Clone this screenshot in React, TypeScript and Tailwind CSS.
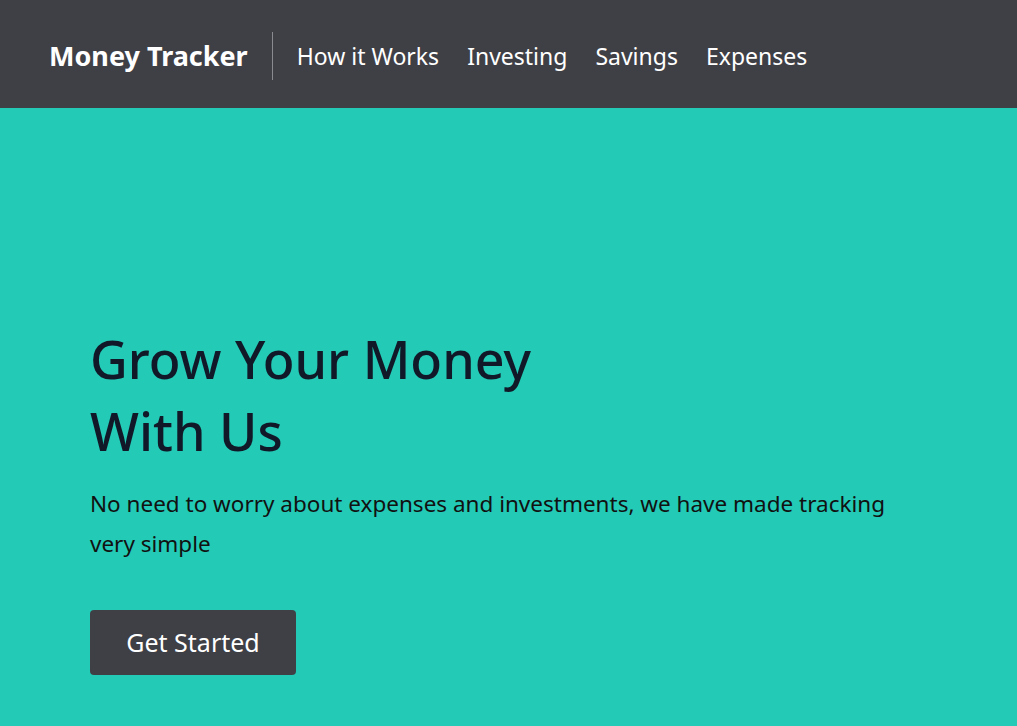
const links = ["How it Works", "Investing", "Savings", "Expenses"];

function Navbar() {
  return (
    <nav className="h-[108px] bg-[#3f4046] flex items-center pl-[49px] pt-1">
      <a className="text-[27px] font-bold text-white pr-6 border-r border-[#8a8b90] h-12 flex items-center">
        Money Tracker
      </a>
      <ul className="flex items-center gap-[28px] pl-6">
        {links.map((l) => (
          <li key={l}>
            <a className="text-[23px] text-white">{l}</a>
          </li>
        ))}
      </ul>
    </nav>
  );
}

function Hero() {
  return (
    <section className="bg-[#23cab6] min-h-[618px] pl-[90px] pt-[215px]">
      <h1 className="text-[52px] font-medium leading-[72px] text-[#111827] max-w-[560px]">
        Grow Your Money With Us
      </h1>
      <p className="mt-[17px] text-[22.5px] leading-[40px] text-[#111111] max-w-[830px]">
        No need to worry about expenses and investments, we have made tracking very simple
      </p>
      <button className="mt-[46px] w-[206px] h-[65px] rounded bg-[#3f4046] text-white text-[25px]">
        Get Started
      </button>
    </section>
  );
}

export default function App() {
  return (
    <div className="font-['Noto_Sans',sans-serif]">
      <Navbar />
      <Hero />
    </div>
  );
}
